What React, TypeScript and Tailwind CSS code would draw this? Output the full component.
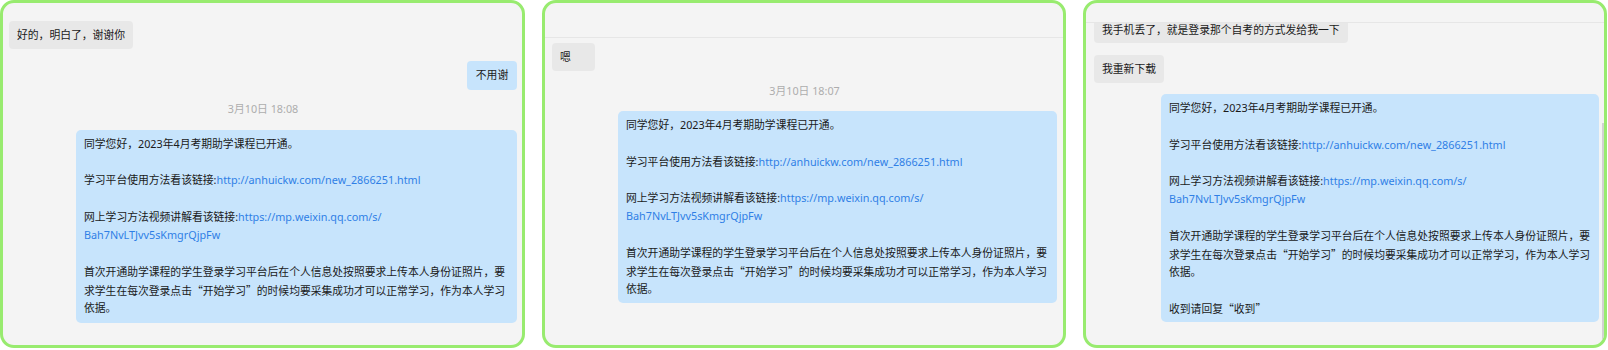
import React from 'react';

type Seg = { t: string; link?: boolean; q?: boolean };
type Line = Seg[] | null; // null = blank line

const BASE_LINES: Line[] = [
  [{ t: '同学您好，2023年4月考期助学课程已开通。' }],
  null,
  [{ t: '学习平台使用方法看该链接:' }, { t: 'http://anhuickw.com/new_2866251.html', link: true }],
  null,
  [{ t: '网上学习方法视频讲解看该链接:' }, { t: 'https://mp.weixin.qq.com/s/', link: true }],
  [{ t: 'Bah7NvLTJvv5sKmgrQjpFw', link: true }],
  null,
  [{ t: '首次开通助学课程的学生登录学习平台后在个人信息处按照要求上传本人身份证照片，要' }],
  [
    { t: '求学生在每次登录点击' },
    { t: '“', q: true },
    { t: '开始学习' },
    { t: '”', q: true },
    { t: '的时候均要采集成功才可以正常学习，作为本人学习' },
  ],
  [{ t: '依据。' }],
];

const LINES_WITH_REPLY: Line[] = [
  ...BASE_LINES,
  null,
  [{ t: '收到请回复' }, { t: '“', q: true }, { t: '收到' }, { t: '”', q: true }],
];

// ─── Bubbles ────────────────────────────────────────────────

const LeftBubble: React.FC<{ text: string; className?: string }> = ({ text, className = '' }) => (
  <div className={`self-start rounded-[4px] bg-[#e8e8e8] px-[8px] whitespace-nowrap ${className}`}>
    {text}
  </div>
);

const RightBubble: React.FC<{ text: string; className?: string }> = ({ text, className = '' }) => (
  <div className={`self-end rounded-[4px] bg-[#c7e4fc] px-[8px] py-[5px] whitespace-nowrap ${className}`}>
    {text}
  </div>
);

const Stamp: React.FC<{ text: string; className?: string }> = ({ text, className = '' }) => (
  <div className={`text-center text-[#adadad] leading-[18px] ${className}`}>{text}</div>
);

const NoticeBubble: React.FC<{ lines: Line[]; className: string; lineClass: string }> = ({
  lines,
  className,
  lineClass,
}) => (
  <div className={`self-end rounded-[5px] bg-[#c7e4fc] px-[8px] py-[5px] ${className}`}>
    {lines.map((line, i) =>
      line === null ? (
        <div key={i} className={lineClass} />
      ) : (
        <div key={i} className={`whitespace-nowrap ${lineClass}`}>
          {line.map((s, j) => (
            <span
              key={j}
              className={
                s.link
                  ? 'text-[#2f7fe6]'
                  : s.q
                  ? "font-['Noto_Sans_CJK_SC',sans-serif]"
                  : undefined
              }
            >
              {s.t}
            </span>
          ))}
        </div>
      ),
    )}
  </div>
);

// ─── App ────────────────────────────────────────────────────

export default function App() {
  const panel =
    'h-[348px] rounded-[14px] border-[3px] border-[#98eb6f] bg-[#f4f4f4] overflow-hidden flex flex-col';

  return (
    <div className="w-[1608px] h-[350px] bg-white flex gap-[17px] text-[#1a1a1a] text-[10.8px] font-['Noto_Sans','Noto_Sans_CJK_SC',sans-serif]">
      {/* Panel 1 */}
      <div className={`${panel} w-[525px] leading-[18.3px]`}>
        <div className="flex flex-col pt-[18px] pl-[6px] pr-[5px]">
          <LeftBubble text="好的，明白了，谢谢你" className="py-[5px]" />
          <RightBubble text="不用谢" className="mt-[12px] min-w-[50px] text-center" />
          <Stamp text="3月10日 18:08" className="mt-[10px]" />
          <NoticeBubble lines={BASE_LINES} className="mt-[12px] w-[441px]" lineClass="h-[18.3px]" />
        </div>
      </div>

      {/* Panel 2 */}
      <div className={`${panel} w-[524px] leading-[18.2px]`}>
        <div className="h-[35px] shrink-0 border-b border-[#e6e6e6]" />
        <div className="flex flex-col pl-[7px] pr-[6px]">
          <LeftBubble text="嗯" className="mt-[5px] w-[43px] py-[5px]" />
          <Stamp text="3月10日 18:07" className="mt-[11px]" />
          <NoticeBubble lines={BASE_LINES} className="mt-[11px] w-[439px]" lineClass="h-[18.2px]" />
        </div>
      </div>

      {/* Panel 3 */}
      <div className={`${panel} w-[524px] leading-[18.2px] relative`}>
        <div className="h-[20px] shrink-0 border-b border-[#e6e6e6]" />
        <div className="flex-1 overflow-hidden">
          <div className="flex flex-col pl-[8px] pr-[5px]">
            {/* top of this bubble is scrolled under the header */}
            <LeftBubble
              text="我手机丢了，就是登录那个自考的方式发给我一下"
              className="rounded-t-none pt-[1px] pb-[7px] leading-[12px]"
            />
            <LeftBubble text="我重新下载" className="mt-[12px] py-[5px]" />
            <NoticeBubble lines={LINES_WITH_REPLY} className="mt-[11px] w-[438px]" lineClass="h-[18.2px]" />
          </div>
        </div>
        <div className="absolute right-0 top-[120px] h-[228px] w-[2px] bg-[#d2d2d2]" />
      </div>
    </div>
  );
}
